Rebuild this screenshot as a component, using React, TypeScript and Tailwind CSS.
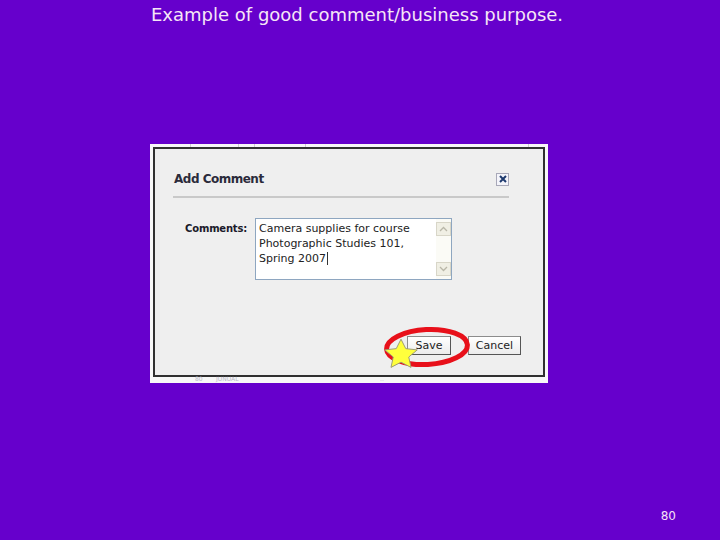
import React from "react";

function ScrollArrow({ up }: { up: boolean }) {
  return (
    <div className="w-[15px] h-[14px] bg-[#f0efe4] border border-[#d8d6c8] flex items-center justify-center">
      <svg width="9" height="6" viewBox="0 0 9 6">
        <path
          d={up ? "M1 5 L4.5 1.5 L8 5" : "M1 1 L4.5 4.5 L8 1"}
          fill="none"
          stroke="#b9b7a8"
          strokeWidth="1.3"
        />
      </svg>
    </div>
  );
}

export default function App() {
  const ui = { fontFamily: '"DejaVu Sans", Verdana, sans-serif' };
  return (
    <div
      className="w-[720px] h-[540px] bg-[#6600cc] flex flex-col overflow-hidden"
      style={ui}
    >
      <div className="pl-[151px] pt-[4px] text-[18px] leading-[22px] text-[#f6e6f6]">
        Example of good comment/business purpose.
      </div>

      <div className="ml-[150px] mt-[118px] w-[398px] h-[239px] bg-[#f8f8f8] relative pt-[3px] pl-[3px]">
        {/* faint background page marks */}
        <div className="absolute left-[40px] top-0 w-px h-[3px] bg-[#cfcfcf]" />
        <div className="absolute left-[88px] top-0 w-px h-[3px] bg-[#cfcfcf]" />
        <div className="absolute left-[104px] top-0 w-px h-[3px] bg-[#cfcfcf]" />
        <div className="absolute left-[155px] top-0 w-px h-[3px] bg-[#cfcfcf]" />
        <div className="absolute left-[378px] top-0 w-px h-[3px] bg-[#cfcfcf]" />
        <div className="absolute left-[45px] bottom-[1px] text-[6px] leading-[6px] text-[#b8b8c8]">
          80&nbsp;&nbsp;&nbsp;&nbsp;&nbsp;&nbsp;&nbsp;JUNUAL
        </div>
        <div className="absolute left-[230px] bottom-[1px] text-[6px] leading-[6px] text-[#b8b8c8]">
          ..
        </div>

        <div className="w-[392px] h-[230px] border-2 border-[#303030] bg-[#efefef] flex flex-col">
          {/* header */}
          <div className="ml-[18px] mr-[34px] mt-[22px]">
            <div className="flex items-center justify-between h-[16px]">
              <span className="text-[12px] font-bold text-[#2b2b3b] pl-[1px] tracking-[-0.5px]">
                Add Comment
              </span>
              <div className="w-[13px] h-[13px] border border-[#a8a8b8] bg-[#f4f4fa] flex items-center justify-center">
                <svg width="8" height="8" viewBox="0 0 8 8">
                  <path d="M1 1 L7 7 M7 1 L1 7" stroke="#1e3a6e" strokeWidth="2" />
                </svg>
              </div>
            </div>
            <div className="h-[2px] bg-[#c9c9c9] mt-[9px]" />
          </div>

          {/* comments row */}
          <div className="ml-[18px] mt-[20px] flex items-start">
            <div className="w-[74px] text-right text-[10px] font-bold text-[#1a1a2a] pt-[4px] leading-[14px] tracking-[-0.2px]">
              Comments:
            </div>
            <div className="ml-[8px] w-[197px] h-[62px] border border-[#8ea6c0] bg-white flex">
              <div
                className="flex-1 pl-[3px] pt-[2px] text-[11px] leading-[15px] text-[#222]"
                style={{ fontFamily: '"DejaVu Sans", Tahoma, sans-serif' }}
              >
                <div>Camera supplies for course</div>
                <div>Photographic Studies 101,</div>
                <div className="flex items-center">
                  Spring 2007
                  <span className="inline-block w-px h-[13px] bg-[#333] ml-[1px]" />
                </div>
              </div>
              <div className="w-[15px] bg-[#fbfbf6] flex flex-col justify-between py-[3px]">
                <ScrollArrow up={true} />
                <ScrollArrow up={false} />
              </div>
            </div>
          </div>

          {/* buttons */}
          <div className="mt-auto mb-[20px] mr-[22px] flex justify-end gap-[17px]">
            <button
              className="w-[44px] h-[19px] bg-gradient-to-b from-white to-[#ececec] border border-[#8c8c8c] border-r-[#555] border-b-[#555] text-[11px] leading-[17px] text-[#222]"
              style={{ fontFamily: '"DejaVu Sans", Tahoma, sans-serif' }}
            >
              Save
            </button>
            <button
              className="w-[53px] h-[19px] bg-gradient-to-b from-white to-[#ececec] border border-[#8c8c8c] border-r-[#555] border-b-[#555] text-[11px] leading-[17px] text-[#222]"
              style={{ fontFamily: '"DejaVu Sans", Tahoma, sans-serif' }}
            >
              Cancel
            </button>
          </div>
        </div>

        {/* annotation: red ellipse and star */}
        <svg
          className="absolute left-0 top-0 pointer-events-none"
          width="398"
          height="239"
          viewBox="0 0 398 239"
        >
          <ellipse
            cx="277"
            cy="203"
            rx="40.5"
            ry="17.5"
            fill="none"
            stroke="#e8101a"
            strokeWidth="5"
            transform="rotate(-3 277 203)"
          />
          <polygon
            points="251,196 254.8,204.2 264,205.3 257.2,211.5 259,220.5 251,216 243,220.5 244.8,211.5 238,205.3 247.2,204.2"
            fill="#ffff3c"
            stroke="#9a9a70"
            strokeWidth="0.8"
            transform="translate(251 209) scale(1.25 1.15) translate(-251 -208)"
          />
        </svg>
      </div>

      <div className="mt-auto pr-[44px] pb-[17px] flex justify-end text-[12px] leading-[14px] text-[#f6e0f6]">
        80
      </div>
    </div>
  );
}
